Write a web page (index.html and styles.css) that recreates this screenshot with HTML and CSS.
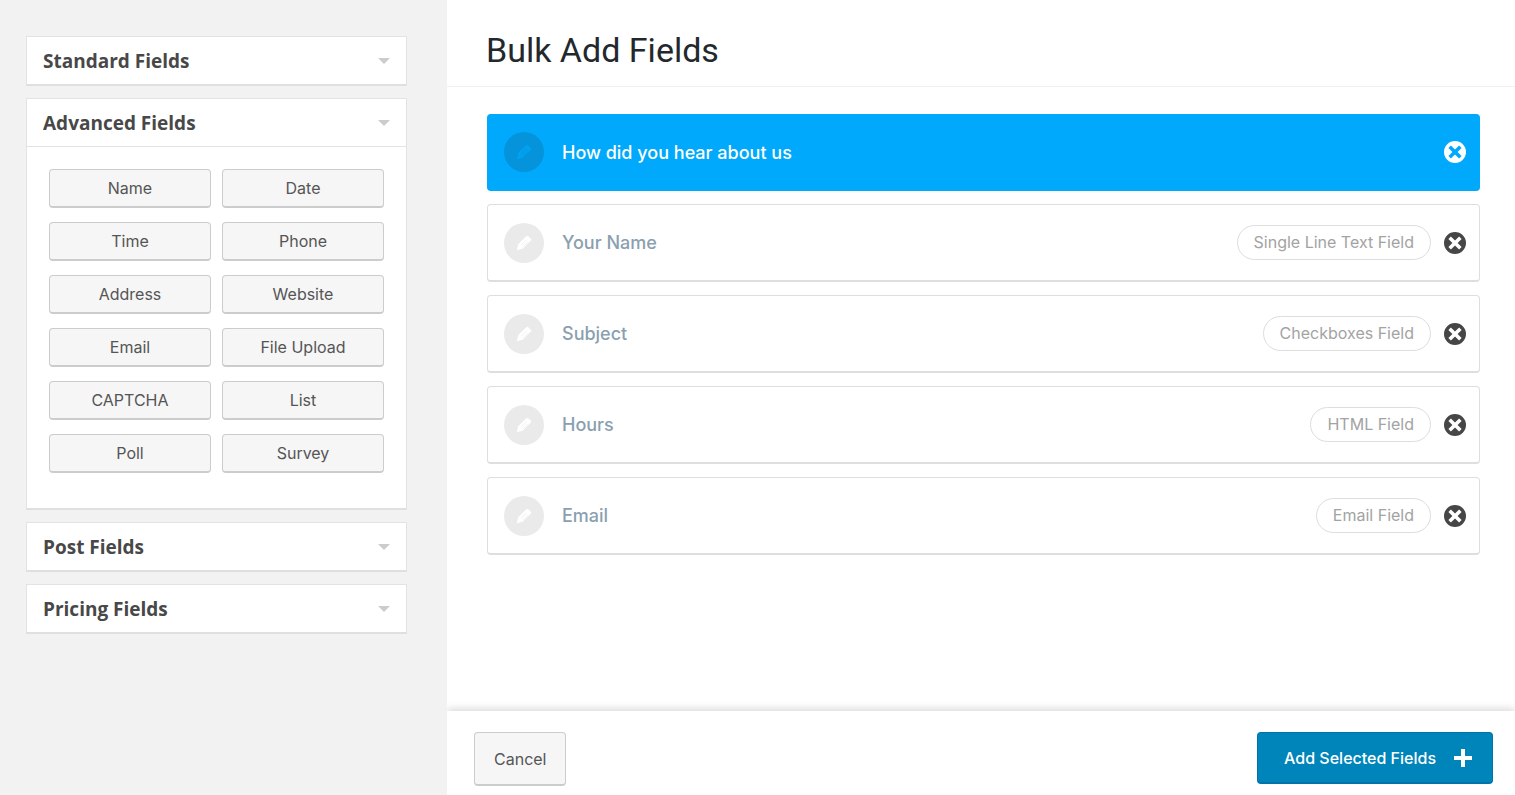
FILE: index.html
```html
<!DOCTYPE html>
<html lang="en">
<head>
<meta charset="utf-8">
<title>Bulk Add Fields</title>
<link rel="stylesheet" href="styles.css">
</head>
<body>
<svg class="sprite" aria-hidden="true">
  <symbol id="pencil" viewBox="0 0 16 16">
    <path fill="currentColor" d="M0 16 L1.800 9 L10 1 Q11 0 12.200 0.800 L15.200 3.600 Q16.200 4.600 15.200 5.800 L7 14 Z"/>
    <path class="groove" d="M5 10.400 L10.600 4.800 M7 12.200 L12.600 6.600" fill="none" stroke-width="0.700"/>
  </symbol>
  <symbol id="remove" viewBox="0 0 22 22">
    <path fill="currentColor" fill-rule="evenodd" d="M11 0 A11 11 0 1 1 11 22 A11 11 0 1 1 11 0 Z M4.400 6.900 L8.400 11 L4.400 15.100 L6.900 17.600 L11 13.600 L15.100 17.600 L17.600 15.100 L13.600 11 L17.600 6.900 L15.100 4.400 L11 8.400 L6.900 4.400 Z"/>
  </symbol>
</svg>
<div class="app">
  <aside class="sidebar">
    <section class="panel">
      <button class="panel-head" type="button" aria-expanded="false">Standard Fields<span class="caret"></span></button>
    </section>
    <section class="panel">
      <button class="panel-head" type="button" aria-expanded="true">Advanced Fields<span class="caret"></span></button>
      <div class="panel-body">
        <button class="btn field-btn" type="button">Name</button>
        <button class="btn field-btn" type="button">Date</button>
        <button class="btn field-btn" type="button">Time</button>
        <button class="btn field-btn" type="button">Phone</button>
        <button class="btn field-btn" type="button">Address</button>
        <button class="btn field-btn" type="button">Website</button>
        <button class="btn field-btn" type="button">Email</button>
        <button class="btn field-btn" type="button">File Upload</button>
        <button class="btn field-btn" type="button">CAPTCHA</button>
        <button class="btn field-btn" type="button">List</button>
        <button class="btn field-btn" type="button">Poll</button>
        <button class="btn field-btn" type="button">Survey</button>
      </div>
    </section>
    <section class="panel">
      <button class="panel-head" type="button" aria-expanded="false">Post Fields<span class="caret"></span></button>
    </section>
    <section class="panel">
      <button class="panel-head" type="button" aria-expanded="false">Pricing Fields<span class="caret"></span></button>
    </section>
  </aside>
  <main class="main">
    <header class="main-head"><h1 class="title">Bulk Add Fields</h1></header>
    <ul class="rows">
      <li class="row row-active">
        <button class="edit" type="button" aria-label="Edit How did you hear about us"><svg class="edit-icon"><use href="#pencil"/></svg></button>
        <span class="row-name">How did you hear about us</span>
        <button class="remove" type="button" aria-label="Remove How did you hear about us"><svg class="remove-icon"><use href="#remove"/></svg></button>
      </li>
      <li class="row">
        <button class="edit" type="button" aria-label="Edit Your Name"><svg class="edit-icon"><use href="#pencil"/></svg></button>
        <span class="row-name">Your Name</span>
        <span class="tag">Single Line Text Field</span>
        <button class="remove" type="button" aria-label="Remove Your Name"><svg class="remove-icon"><use href="#remove"/></svg></button>
      </li>
      <li class="row">
        <button class="edit" type="button" aria-label="Edit Subject"><svg class="edit-icon"><use href="#pencil"/></svg></button>
        <span class="row-name">Subject</span>
        <span class="tag">Checkboxes Field</span>
        <button class="remove" type="button" aria-label="Remove Subject"><svg class="remove-icon"><use href="#remove"/></svg></button>
      </li>
      <li class="row">
        <button class="edit" type="button" aria-label="Edit Hours"><svg class="edit-icon"><use href="#pencil"/></svg></button>
        <span class="row-name">Hours</span>
        <span class="tag">HTML Field</span>
        <button class="remove" type="button" aria-label="Remove Hours"><svg class="remove-icon"><use href="#remove"/></svg></button>
      </li>
      <li class="row">
        <button class="edit" type="button" aria-label="Edit Email"><svg class="edit-icon"><use href="#pencil"/></svg></button>
        <span class="row-name">Email</span>
        <span class="tag">Email Field</span>
        <button class="remove" type="button" aria-label="Remove Email"><svg class="remove-icon"><use href="#remove"/></svg></button>
      </li>
    </ul>
    <footer class="footer">
      <button class="btn cancel" type="button">Cancel</button>
      <button class="submit" type="button">Add Selected Fields<svg class="plus" viewBox="0 0 18 18" aria-hidden="true"><path d="M9 0V18M0 9H18" stroke="currentColor" stroke-width="4"/></svg></button>
    </footer>
  </main>
</div>
</body>
</html>
```

FILE: styles.css
```css
* { box-sizing: border-box; }

body {
  margin: 0;
  background: #fff;
  font-family: Inter, "Liberation Sans", sans-serif;
}

button {
  margin: 0;
  font-family: inherit;
  cursor: pointer;
}

.sprite { display: none; }

.app {
  display: flex;
  min-height: 100vh;
}

.sidebar {
  display: flex;
  flex: 0 0 447px;
  flex-direction: column;
  gap: 12px;
  padding: 36px 40px 36px 26px;
  background: #f2f2f2;
}

.panel {
  border: 1px solid #e3e3e3;
  border-bottom: 2px solid #dfdfdf;
  background: #fff;
}

.panel-head {
  display: flex;
  align-items: center;
  justify-content: space-between;
  width: 100%;
  height: 47px;
  padding: 0 16px;
  border: 0;
  background: none;
  color: #484848;
  font-family: "Open Sans", sans-serif;
  font-size: 19px;
  font-weight: 700;
}

.caret {
  border: 6px solid transparent;
  border-top-color: #ccc;
  border-bottom: 0;
}

.panel-body {
  display: grid;
  grid-template-columns: 1fr 1fr;
  gap: 14px 11px;
  padding: 22px 22px 35px;
  border-top: 1px solid #e3e3e3;
}

.btn {
  border: 1px solid #ccc;
  border-bottom-width: 2px;
  border-radius: 4px;
  background: #f6f6f6;
  color: #555;
  font-size: 16px;
}

.field-btn {
  height: 39px;
  padding: 0 8px 1px;
}

.main {
  display: flex;
  flex: 1;
  flex-direction: column;
  min-width: 0;
}

.main-head {
  padding: 28px 39px 14px;
  border-bottom: 1px solid #f0f0f0;
}

.title {
  margin: 0;
  color: #23282d;
  font-family: Roboto, "Liberation Sans", sans-serif;
  font-size: 34px;
  font-weight: 400;
  line-height: 44px;
}

.rows {
  display: flex;
  flex: 1;
  flex-direction: column;
  gap: 13px;
  margin: 0;
  padding: 27px 35px 27px 40px;
  list-style: none;
}

.row {
  display: flex;
  align-items: center;
  height: 78px;
  padding: 0 13px 0 16px;
  border: 1px solid #dedede;
  border-bottom-width: 2px;
  border-radius: 4px;
}

.row-active {
  height: 77px;
  border-color: #00a9fb;
  background: #00a9fb;
}

.edit {
  display: flex;
  align-items: center;
  justify-content: center;
  width: 40px;
  height: 40px;
  padding: 0;
  border: 0;
  border-radius: 50%;
  background: #eaeaea;
  color: #fff;
}

.row-active .edit {
  background: #0594db;
  color: #00a1f0;
}

.edit-icon {
  width: 16px;
  height: 16px;
  stroke: #eaeaea;
}

.row-active .edit-icon { stroke: #0594db; }

.edit-icon,
.remove-icon { display: block; }

.row-name {
  flex: 1;
  margin-left: 18px;
  color: #8a9fb0;
  font-size: 18px;
  font-weight: 500;
}

.row-active .row-name { color: #fff; }

.tag {
  padding: 0 16px;
  border: 1px solid #ddd;
  border-radius: 18px;
  color: #a3a3a3;
  font-size: 16px;
  line-height: 33px;
}

.remove {
  display: flex;
  margin-left: 13px;
  padding: 0;
  border: 0;
  background: none;
  color: #464646;
}

.row-active .remove { color: #fff; }

.remove-icon {
  width: 22px;
  height: 22px;
}

.footer {
  display: flex;
  align-items: center;
  justify-content: space-between;
  padding: 21px 22px 9px 27px;
  background: #fff;
  box-shadow: 0 -2px 8px rgba(0, 0, 0, 0.16);
  clip-path: inset(-20px 0 0 0);
}

.cancel {
  height: 54px;
  padding: 0 19px;
}

.submit {
  display: flex;
  align-items: center;
  align-self: flex-start;
  gap: 18px;
  height: 52px;
  padding: 0 20px 0 26px;
  border: 1px solid #0073aa;
  border-bottom-width: 2px;
  border-radius: 4px;
  background: #0085ba;
  color: #fff;
  font-size: 16px;
  font-weight: 500;
}

.plus {
  width: 18px;
  height: 18px;
}
```
